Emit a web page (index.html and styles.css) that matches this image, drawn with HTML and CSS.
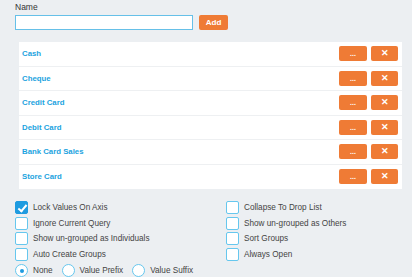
FILE: index.html
```html
<!DOCTYPE html>
<html lang="en">
<head>
    <meta charset="UTF-8">
    <title>Groups</title>
    <link rel="stylesheet" href="styles.css">
</head>
<body>

    <label class="name-label" for="groupName">Name</label>
    <div class="name-row">
        <input type="text" id="groupName" class="name-input">
        <button type="button" class="btn add">Add</button>
    </div>

    <div class="list">
        <div class="row"><span class="row-name">Cash</span><button class="btn small">...</button><button class="btn small">&#x2715;</button></div>
        <div class="row"><span class="row-name">Cheque</span><button class="btn small">...</button><button class="btn small">&#x2715;</button></div>
        <div class="row"><span class="row-name">Credit Card</span><button class="btn small">...</button><button class="btn small">&#x2715;</button></div>
        <div class="row"><span class="row-name">Debit Card</span><button class="btn small">...</button><button class="btn small">&#x2715;</button></div>
        <div class="row"><span class="row-name">Bank Card Sales</span><button class="btn small">...</button><button class="btn small">&#x2715;</button></div>
        <div class="row"><span class="row-name">Store Card</span><button class="btn small">...</button><button class="btn small">&#x2715;</button></div>
    </div>

    <div class="options">
        <label class="check"><span class="box checked"></span>Lock Values On Axis</label>
        <label class="check"><span class="box"></span>Collapse To Drop List</label>
        <label class="check"><span class="box"></span>Ignore Current Query</label>
        <label class="check"><span class="box"></span>Show un-grouped as Others</label>
        <label class="check"><span class="box"></span>Show un-grouped as Individuals</label>
        <label class="check"><span class="box"></span>Sort Groups</label>
        <label class="check"><span class="box"></span>Auto Create Groups</label>
        <label class="check"><span class="box"></span>Always Open</label>
    </div>

    <div class="radios">
        <label class="radio"><span class="dot selected"></span>None</label>
        <label class="radio"><span class="dot"></span>Value Prefix</label>
        <label class="radio"><span class="dot"></span>Value Suffix</label>
    </div>

</body>
</html>
```

FILE: styles.css
```css
body {
    margin: 0;
    padding: 2px 10px 0 15px;
    background: #eceff2;
    color: #333;
    font-family: "Liberation Sans", Arial, sans-serif;
    font-size: 8.5px;
}
.name-label {
    display: block;
    height: 13px;
    line-height: 10px;
}
.name-row {
    display: flex;
    align-items: center;
    gap: 6px;
}
.name-input {
    box-sizing: border-box;
    width: 178px;
    height: 15px;
    margin: 0;
    border: 1px solid #66c0e8;
    background: #fff;
    padding: 0 3px;
}
.btn {
    border: none;
    border-radius: 2px;
    background: #ef7b35;
    color: #fff;
    font-family: inherit;
    font-weight: bold;
    cursor: pointer;
    padding: 0;
}
.add {
    width: 29px;
    height: 15px;
    font-size: 8px;
}
.list {
    margin: 12px 0 0 4px;
    background: #fff;
}
.row {
    display: flex;
    align-items: center;
    gap: 4px;
    height: 24.5px;
    box-sizing: border-box;
    padding: 0 4px 0 3px;
    border-bottom: 1px solid #eef0f2;
}
.row:last-child {
    border-bottom: none;
}
.row-name {
    flex: 1;
    color: #1ba3e0;
    font-weight: bold;
    font-size: 7.8px;
}
.small {
    width: 28px;
    height: 15px;
    font-size: 7px;
    line-height: 15px;
}
.small:last-child {
    width: 27px;
    font-size: 9px;
}
.options {
    display: grid;
    grid-template-columns: 211px 1fr;
    row-gap: 2.5px;
    margin-top: 12px;
}
.check, .radio {
    display: flex;
    align-items: center;
    gap: 5px;
    height: 13px;
    font-size: 8.2px;
    color: #444;
}
.box {
    box-sizing: border-box;
    width: 13px;
    height: 13px;
    border: 1px solid #66c7ee;
    border-radius: 2px;
    background: #fff;
    position: relative;
}
.box.checked {
    background: #1e9be0;
    border-color: #1e9be0;
}
.box.checked::after {
    content: "";
    position: absolute;
    left: 3.5px;
    top: 0.5px;
    width: 3px;
    height: 7px;
    border: solid #fff;
    border-width: 0 2px 2px 0;
    transform: rotate(40deg);
}
.radios {
    display: flex;
    gap: 9px;
    margin-top: 3.5px;
}
.dot {
    box-sizing: border-box;
    width: 13px;
    height: 13px;
    border: 1px solid #66c7ee;
    border-radius: 50%;
    background: #fff;
    position: relative;
}
.dot.selected::after {
    content: "";
    position: absolute;
    left: 3.5px;
    top: 3.5px;
    width: 4px;
    height: 4px;
    border-radius: 50%;
    background: #1e9be0;
}
```
